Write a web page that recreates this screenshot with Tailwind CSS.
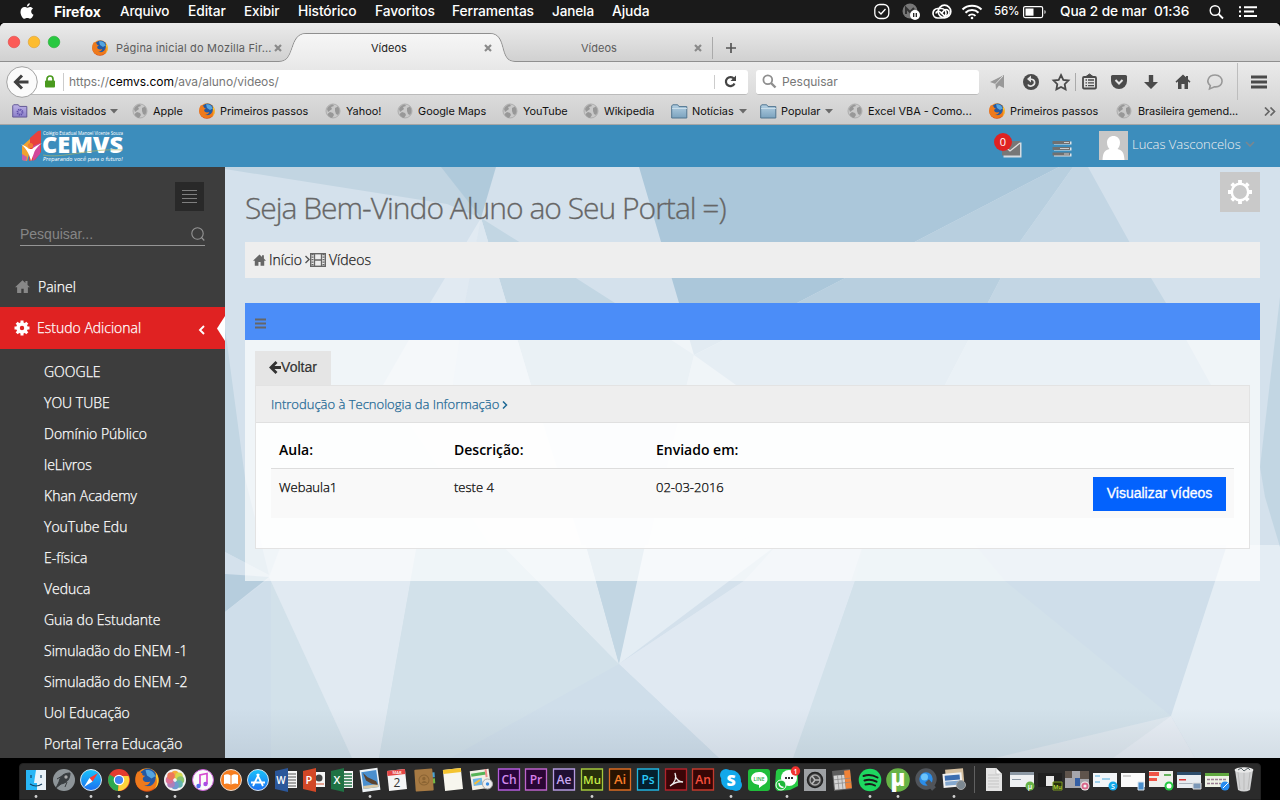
<!DOCTYPE html>
<html lang="pt-BR">
<head>
<meta charset="utf-8">
<title>Vídeos</title>
<script src="https://cdn.jsdelivr.net/npm/@tailwindcss/browser@4"></script>
</head>
<body class="w-[1280px] h-[800px] overflow-hidden bg-black font-['Open_Sans',sans-serif]">
<svg width="0" height="0" class="absolute">
  <defs>
    <radialGradient id="fx" cx=".6" cy=".3" r=".8"><stop offset="0" stop-color="#ffc928"/><stop offset=".5" stop-color="#f5861f"/><stop offset="1" stop-color="#c9350f"/></radialGradient>
    <linearGradient id="fold" x2="0" y2="1"><stop offset="0" stop-color="#b4d0e3"/><stop offset="1" stop-color="#7ba2be"/></linearGradient>
    <linearGradient id="foldp" x2="0" y2="1"><stop offset="0" stop-color="#bdb3e6"/><stop offset="1" stop-color="#8b7fc9"/></linearGradient>
    <linearGradient id="tab" x2="0" y2="1"><stop offset="0" stop-color="#f6f6f6"/><stop offset="1" stop-color="#ebebeb"/></linearGradient>
    <linearGradient id="blue" x2="0" y2="1"><stop offset="0" stop-color="#1ac4fb"/><stop offset="1" stop-color="#1b6ff0"/></linearGradient>
    <linearGradient id="shade" x2="0" y2="1"><stop offset="0" stop-color="#405060" stop-opacity="0"/><stop offset="1" stop-color="#405060" stop-opacity=".1"/></linearGradient>
    <symbol id="firefox" viewBox="0 0 16 16"><circle cx="8" cy="8" r="7.8" fill="url(#fx)"/><circle cx="8.600" cy="6.300" r="5.900" fill="#2459a3"/><path d="M7 1.500c3-.8 6 1 6.500 4L11 7 8 5z" fill="#55a5df"/><path d="M.5 5C1 3.500 1.700 2.800 2 2c.6.900 1.500 1.300 3 1.500-.5.800-.2 1.500 1.800 1.700C6.300 6.200 5 6 5.200 7.500c.8 2.500 3.500 2 5 1.500-.8 2.500-3 3-4.500 2.500 3.500 2.500 8-.5 8-5 1 1 1.200 3 .6 4.500C12.500 17-.5 17 .3 7z" fill="#ee7a1c"/><path d="M14 3.500c2.500 3 2.300 8-1 10.500 2-3 2-6 .7-8z" fill="#fdc52c"/></symbol>
    <symbol id="globe" viewBox="0 0 16 16"><circle cx="8" cy="8" r="7" fill="#c9c9c9" stroke="#a0a0a0" stroke-width=".7"/><path d="M2 6c1-3 4-4.500 6-4.500L9 3 6 4l1 2-2 1.500L3 9zM10 5l3-1.500c2 3 2 6 0 8.500l-2-1-1-3zM5 9l3 1 1 2-2 3c-2-.5-4-2-4.500-4z" fill="#989898"/></symbol>
    <symbol id="folder" viewBox="0 0 17 15"><path d="M.7 14V2l1-1.200h5L8 2.600h7.800V14z" fill="url(#fold)" stroke="#527690"/><path d="M1 4.500h15" stroke="#d4e4ef" stroke-width=".8"/></symbol>
    <symbol id="x" viewBox="0 0 8 8"><path d="M1 1l6 6M7 1L1 7" stroke="#8a8a8a" stroke-width="2.200"/></symbol>
    <symbol id="home" viewBox="0 0 16 14"><path d="M8 .3L0 7.800h2.200V14h4.500V9.500h2.600V14h4.500V7.800H16l-2.600-2.500V1h-2.300v2.200z"/></symbol>
    <symbol id="gear" viewBox="-8 -8 16 16"><circle r="4" fill="none" stroke="#fff" stroke-width="3.600"/><path d="M0-7.500V-4M0 7.500V4M-7.500 0H-4M7.500 0H4M-5.300-5.300L-3-3M5.300 5.300L3 3M-5.300 5.300L-3 3M5.300-5.300L3-3" stroke="#fff" stroke-width="3"/></symbol>
  </defs>
</svg>

<!-- macOS menu bar -->
<header class="h-[23px] bg-[#1a1a1a] text-white flex items-center font-['Inter',sans-serif] text-[13.8px] font-medium tracking-[-0.1px] whitespace-nowrap">
  <svg class="ml-5 mr-[20px] -mt-0.5 shrink-0" width="14" height="16" viewBox="0 0 14 16" fill="#fff"><path d="M9.800.2C9.900 1.800 8.500 3.500 6.900 3.500 6.800 1.900 8.200.4 9.800.2zM7.100 4.700C7.700 4.700 8.600 3.900 10 3.900c1.200 0 2.300.6 3 1.600-2.600 1.500-2.200 5.200.5 6.200-.6 1.700-2 4-3.400 4-1.100 0-1.500-.7-2.800-.7s-1.700.7-2.800.7C2.600 15.700.5 12 .5 8.900c0-3.100 2-4.900 4-4.900 1.200 0 2.100.7 2.600.7z"/></svg>
  <span class="w-[66px] font-bold text-[14px]">Firefox</span><span class="w-[68px] text-[13.500px]">Arquivo</span><span class="w-[56px]">Editar</span><span class="w-[54px] text-[13.500px]">Exibir</span><span class="w-[77px]">Histórico</span><span class="w-[77px]">Favoritos</span><span class="w-[100px]">Ferramentas</span><span class="w-[60px] text-[13.500px]">Janela</span><span class="w-[262px]">Ajuda</span>
  <svg width="118" height="18" viewBox="0 0 118 18" class="shrink-0 mt-px" fill="none" stroke="#fff" stroke-width="1.300"><rect x=".8" y="1.500" width="14" height="14" rx="5"/><path d="M4.500 8.500l2.500 2.500 4.500-5"/><circle cx="36" cy="8" r="7.500" fill="#777" stroke="none"/><path d="M32 11V5l4 4 4-4" stroke="#333" stroke-width="2"/><circle cx="41" cy="12" r="5" fill="#fff" stroke="none"/><path d="M39.700 10v4M42.300 10v4" stroke="#222"/><g stroke-width="1.700"><rect x="59" y="5.500" width="13" height="9.500" rx="4.700"/><circle cx="70.500" cy="8.500" r="6.300"/><path d="M62 10.500c0-2.500 3.500-3 5-1l3 3c2.500 1.500 5-.5 5-3s-3-4-5-2l-3 3.500"/></g><g stroke-width="2"><path d="M88.500 6.500c5-5 14-5 19 0M91.500 9.800c3.500-3.600 9.500-3.600 13 0M94.500 12.900c2-2 5-2 7 0"/></g><circle cx="98" cy="15" r="1.300" fill="#fff" stroke="none"/></svg>
  <span class="w-[29px] text-[11.500px] ml-[2px] tracking-[-0.2px]">56%</span>
  <svg width="24" height="14" viewBox="0 0 24 14" class="shrink-0"><rect x=".6" y="1.600" width="19" height="11" rx="1.500" fill="none" stroke="#fff" stroke-width="1.200"/><rect x="2.500" y="3.500" width="8" height="7.200" fill="#fff"/><path d="M21.500 5c1.500.8 1.500 3.200 0 4z" fill="#fff"/></svg>
  <span class="w-[94px] ml-[13px] text-[13.700px]">Qua 2 de mar</span><span class="w-[55px] text-[13.700px]">01:36</span>
  <svg width="50" height="16" viewBox="0 0 50 16" fill="none" stroke="#fff" class="shrink-0 mt-px"><circle cx="6" cy="6.500" r="4.800" stroke-width="1.400"/><path d="M9.500 10l4.500 4.500" stroke-width="1.800"/><path d="M35 3.200h13M35 7.500h10M35 12h13" stroke-width="2"/><path d="M30 3.200h2M30 7.500h2M30 12h2" stroke-width="2"/></svg>
</header>

<!-- Firefox window -->
<div class="h-[735px] rounded-t-[5px] overflow-hidden bg-[#d6d6d6] flex flex-col">
  <div class="h-[39px] shrink-0 relative bg-linear-to-b from-[#ebebeb] to-[#d0d0d0] font-['Inter',sans-serif] text-[11px] text-[#5c5c5c] whitespace-nowrap">
    <svg class="absolute inset-0" width="1280" height="40" viewBox="0 0 1280 40"><path d="M0 38.500H279C296 38.500 288 10.500 306 10.500H490C508 10.500 498 38.500 515 38.500H1280" fill="none" stroke="#8f8f8f"/><path d="M279 39C296 39 289 11 306 11H490C507 11 498 39 515 39z" fill="url(#tab)"/><path d="M712.500 14v22" stroke="#aaa"/><circle cx="14" cy="19" r="5.800" fill="#fc5b57" stroke="#df4744" stroke-width=".6"/><circle cx="34" cy="19" r="5.800" fill="#fdbc2f" stroke="#de9f34" stroke-width=".6"/><circle cx="54" cy="19" r="5.800" fill="#28c840" stroke="#27aa35" stroke-width=".6"/></svg>
    <div class="relative h-[50px] flex items-center">
      <svg class="ml-[92px] mr-2" width="16" height="16"><use href="#firefox"/></svg><span class="w-[158px] tracking-[0.2px]">Página inicial do Mozilla Fir...</span><svg width="8" height="8"><use href="#x"/></svg>
      <span class="ml-[89px] w-[113px] text-[#222]">Vídeos</span><svg width="8" height="8"><use href="#x"/></svg>
      <span class="ml-[89px] w-[113px]">Vídeos</span><svg width="8" height="8"><use href="#x"/></svg>
      <svg class="ml-[24px]" width="10" height="10"><path d="M5 0v10M0 5h10" stroke="#555" stroke-width="1.700"/></svg>
    </div>
  </div>
  <div class="h-[63px] shrink-0 bg-linear-to-b from-[#ebebeb] to-[#cdcdcd] border-b border-[#a5a5a5]">
    <div class="h-[40px] flex items-center pl-[6px] font-['Inter',sans-serif]">
      <svg width="32" height="32" viewBox="0 0 32 32" class="relative z-10 shrink-0"><circle cx="16" cy="16" r="15.300" fill="#fbfbfb" stroke="#a3a3a3"/><path d="M22.500 16H11M16 9.500L9.500 16l6.500 6.500" fill="none" stroke="#404040" stroke-width="3"/></svg>
      <div class="-ml-4 w-[726px] h-[25px] bg-white rounded-[3px] border-b border-[#bbb] flex items-center text-[12px] text-[#777] shrink-0 whitespace-nowrap">
        <svg class="ml-[22px]" width="12" height="13" viewBox="0 0 12 13"><path d="M3 6V4a3 3 0 0 1 6 0v2" fill="none" stroke="#4a9a1e" stroke-width="1.700"/><rect x="1" y="5.500" width="10" height="7" rx="1" fill="#4a9a1e"/></svg>
        <i class="w-px h-[18px] bg-[#ccc] ml-[7px] mr-[5px]"></i><span class="w-[645px] tracking-[-0.050px]">https://<b class="font-normal text-black">cemvs.com</b>/ava/aluno/videos/</span><i class="w-px h-[14px] bg-[#ccc]"></i>
        <svg class="ml-[9px]" width="13" height="13" viewBox="0 0 13 13"><path d="M10 3.800A4.500 4.500 0 1 0 10.500 8.500" fill="none" stroke="#444" stroke-width="2.200"/><path d="M12 .5v5.500H6.500z" fill="#444"/></svg>
      </div>
      <div class="ml-2 w-[223px] h-[25px] bg-white rounded-[3px] border-b border-[#bbb] flex items-center text-[12px] text-[#777] shrink-0"><svg class="ml-[6px] mr-[5px]" width="15" height="15" fill="none" stroke="#8f8f8f"><circle cx="5.800" cy="5.800" r="4.400" stroke-width="1.800"/><path d="M9 9l4.500 4.500" stroke-width="2.400"/></svg>Pesquisar</div>
      <svg width="290" height="40" viewBox="0 0 290 40" class="ml-[10px] shrink-0"><path d="M1 20L15 13V26L10 23.500 7 27.500 6.500 22z" fill="#999"/><path d="M14 14L6.500 22" stroke="#ddd"/><circle cx="42" cy="20" r="8" fill="#4a4a4a"/><path d="M41 17.500c5-1.500 6.500 5 1.500 6.500-1.500.4-3-.3-3.500-1.500" fill="none" stroke="#e4e4e4" stroke-width="1.700"/><path d="M42 13.500v7L38 17z" fill="#e4e4e4"/><path d="M72 13l2.300 4.800 5.200.7-3.800 3.700.9 5.200-4.600-2.500-4.600 2.500.9-5.200-3.800-3.700 5.200-.7z" fill="none" stroke="#4a4a4a" stroke-width="1.800"/><path d="M86.500 11v18" stroke="#aaa"/><rect x="94" y="15" width="13" height="11.500" rx="1" fill="none" stroke="#4a4a4a" stroke-width="1.800"/><path d="M97 14.500l3.500-2.500 3.500 2.500z" fill="#4a4a4a" stroke="#4a4a4a"/><path d="M96.500 18h1.500M99 18h6M96.500 20.800h1.500M99 20.800h6M96.500 23.600h1.500M99 23.600h6" stroke="#4a4a4a" stroke-width="1.300"/><path d="M122 14.500q0-1.500 1.500-1.500h13q1.500 0 1.500 1.500V19a8 8 0 0 1-16 0z" fill="#4a4a4a"/><path d="M126.500 18l3.500 3.500 3.500-3.500" fill="none" stroke="#e4e4e4" stroke-width="2"/><path d="M159.800 13h4.400v7H169l-7 7-7-7h4.800z" fill="#4a4a4a"/><path d="M194 12.500l-7.500 7 1 1.200L189 19.500V27h3.500v-5h3v5h3.500v-7.500l1.500 1.200 1-1.200-2.500-2.300V14h-2v1.300z" fill="#4a4a4a"/><path d="M220.500 27l.8-3.500c-5-4-1.500-10.500 4.700-10.500 9.500 0 9.500 13-.5 11.800z" fill="none" stroke="#999" stroke-width="1.600"/><path d="M248.500 1v37" stroke="#bdbdbd"/><path d="M262 15h16M262 20h16M262 25h16" stroke="#4a4a4a" stroke-width="3"/></svg>
    </div>
    <nav class="h-[18px] flex items-center pl-3 font-['Inter',sans-serif] text-[10.900px] text-[#111] whitespace-nowrap [&>svg]:shrink-0 [&>span]:shrink-0">
      <svg class="mr-[5px]" width="16" height="14" viewBox="0 0 17 15"><path d="M.7 14V2l1-1.200h5L8 2.600h7.800V14z" fill="url(#foldp)" stroke="#5e5291"/><circle cx="8.500" cy="8.800" r="2.700" fill="none" stroke="#5e4fa8" stroke-width="2" stroke-dasharray="1.300 .8"/></svg><span class="w-[77px]">Mais visitados</span><svg width="8" height="5" class="mr-[14px]"><path d="M0 0h8L4 4.500z" fill="#6a6a6a"/></svg>
      <svg width="16" height="16" class="mr-[5px]"><use href="#globe"/></svg><span class="w-[46px]">Apple</span>
      <svg width="16" height="16" class="mr-[5px]"><use href="#firefox"/></svg><span class="w-[105px]">Primeiros passos</span>
      <svg width="16" height="16" class="mr-[5px]"><use href="#globe"/></svg><span class="w-[51px]">Yahoo!</span>
      <svg width="16" height="16" class="mr-[5px]"><use href="#globe"/></svg><span class="w-[84px]">Google Maps</span>
      <svg width="16" height="16" class="mr-[5px]"><use href="#globe"/></svg><span class="w-[60px]">YouTube</span>
      <svg width="16" height="16" class="mr-[5px]"><use href="#globe"/></svg><span class="w-[67px]">Wikipedia</span>
      <svg width="17" height="15" class="mr-[4px]"><use href="#folder"/></svg><span class="w-[47px]">Notícias</span><svg width="8" height="5" class="mr-[13px]"><path d="M0 0h8L4 4.500z" fill="#6a6a6a"/></svg>
      <svg width="17" height="15" class="mr-[4px]"><use href="#folder"/></svg><span class="w-[44px]">Popular</span><svg width="8" height="5" class="mr-[14px]"><path d="M0 0h8L4 4.500z" fill="#6a6a6a"/></svg>
      <svg width="16" height="16" class="mr-[5px]"><use href="#globe"/></svg><span class="w-[121px]">Excel VBA - Como...</span>
      <svg width="16" height="16" class="mr-[5px]"><use href="#firefox"/></svg><span class="w-[106px]">Primeiros passos</span>
      <svg width="16" height="16" class="mr-[6px]"><use href="#globe"/></svg><span class="w-[126px] tracking-[-0.1px]">Brasileira gemend...</span>
      <svg width="12" height="9" fill="none" stroke="#666" stroke-width="1.700"><path d="M1 .5l4 4-4 4M6.500.5l4 4-4 4"/></svg>
    </nav>
  </div>

  <!-- Portal header -->
  <div class="h-[42px] shrink-0 bg-[#3c8dbc] flex items-start">
    <svg class="ml-5 mt-[3px]" width="110" height="36" viewBox="0 0 110 36">
      <path d="M10 10L18 3l3-.5V24l-6 8-6 1z" fill="#e8413c"/><path d="M2 18l8-7v12l-3 10-5-1z" fill="#f0a22f"/><path d="M13 18l7-3v11l-7 7z" fill="#d2479a"/><path d="M2 26l5 3-1 4-4-1z" fill="#c45fa8"/><path d="M1 16c3 1.500 6 3 8 5h3c2-2 6-4 10-6-5 4-7 7-8 10l-3 8c-1-5-4-12-10-17z" fill="#fff"/><circle cx="10.500" cy="17.500" r="2.600" fill="#f07c35"/>
      <text x="23" y="6.500" font-family="Open Sans" font-size="4.500" fill="#fff" textLength="80">Colégio Estadual Manoel Vicente Souza</text>
      <text x="22" y="24.800" font-family="Open Sans" font-weight="800" font-size="23.500" fill="#fff" textLength="81" lengthAdjust="spacingAndGlyphs">CEMVS</text>
      <path d="M23 27c20 4 45-7 80-5" fill="none" stroke="#a9b46b" stroke-width=".7"/>
      <text x="23" y="33" font-family="DejaVu Sans" font-style="italic" font-size="5.500" fill="#fff" textLength="80" lengthAdjust="spacingAndGlyphs">Preparando você para o futuro!</text>
    </svg>
    <div class="ml-[862px] relative w-[30px] h-[42px]">
      <svg class="absolute left-[9px] top-[15px]" width="22" height="18"><rect x="2.500" y="2.500" width="18" height="15" fill="#d5dbe0"/><rect x="1" y="1" width="18" height="14.500" fill="#777"/><path d="M1 4l8 7L19 3" fill="none" stroke="#ddd" stroke-width="1.300"/></svg>
      <span class="absolute left-[2px] top-[8px] size-[18px] rounded-full bg-[#e02222] text-white text-[11px] leading-[17px] text-center">0</span>
    </div>
    <svg class="ml-[30px] mt-[15px]" width="20" height="17"><path d="M2 3h17.500M2 9h17.500M2 15h17.500" stroke="#dfe3e6" stroke-width="3"/><path d="M.5 2.500h17.500M.5 8.500h17.500M.5 14h17.500" stroke="#707070" stroke-width="3.200"/><path d="M12 2.500h5M8 8.500h9M12 14h5" stroke="#ccc"/></svg>
    <svg class="ml-[27px] mt-[6px]" width="29" height="29" viewBox="0 0 29 29"><path fill="#c7c7c7" d="M0 0h29v29H0z"/><path d="M14.500 5c3.500 0 6.500 2.500 6.500 6.500 0 3-1 5-2.500 6.500 4 1 6.500 2.500 7 11h-22c.500-8.500 3-10 7-11C9 16.500 8 14.500 8 11.500 8 7.500 11 5 14.500 5z" fill="#fff"/></svg>
    <span class="ml-[4px] mt-[9px] text-[13px] leading-[20px] font-light text-[#f0f0f0] w-[113px] whitespace-nowrap">Lucas Vasconcelos</span>
    <svg class="mt-[16px]" width="10" height="7" fill="none" stroke="#7a8790" stroke-width="1.600"><path d="M1 1l4 4 4-4"/></svg>
  </div>

  <div class="flex h-[591px]">
    <!-- Sidebar -->
    <aside class="w-[225px] shrink-0 bg-[#3d3d3d] text-white text-[14px] font-light [-webkit-text-stroke:0.25px_white]">
      <div class="h-[15px]"></div>
      <div class="ml-[175px] size-[29px] bg-[#292929] flex flex-col items-center justify-center gap-[3px]"><i class="w-[15px] h-px bg-[#7f7f7f]"></i><i class="w-[15px] h-px bg-[#7f7f7f]"></i><i class="w-[15px] h-px bg-[#7f7f7f]"></i><i class="w-[15px] h-px bg-[#7f7f7f]"></i></div>
      <div class="mt-[12px] mx-5 h-[23px] border-b border-[#959595] flex items-center justify-between font-['Liberation_Sans',sans-serif] text-[14px] text-[#868686] [-webkit-text-stroke:0px]">Pesquisar...<svg width="14" height="14" fill="none" stroke="#959595" stroke-width="1.100"><circle cx="6.500" cy="6.500" r="5.700"/><path d="M10.500 10.500l2.800 3"/></svg></div>
      <div class="mt-[20px] h-[41px] flex items-center pl-[15px]"><svg width="15" height="13" fill="#888"><use href="#home"/></svg><span class="ml-2">Painel</span></div>
      <div class="h-[42px] bg-[#e02222] flex items-center pl-[14px] relative"><svg width="16" height="16"><use href="#gear"/></svg><span class="ml-[7px] w-[161px] -mt-px">Estudo Adicional</span><svg class="mt-[3px]" width="8" height="10" fill="none" stroke="#fff" stroke-width="1.900"><path d="M6 1L2 5l4 4"/></svg><svg class="absolute right-0 top-[9px]" width="8" height="25"><path d="M8 0v25L0 12.500z" fill="#fff"/></svg></div>
      <ul class="pt-[7px] pl-11 leading-[31px]">
        <li>GOOGLE</li><li>YOU TUBE</li><li>Domínio Público</li><li>leLivros</li><li>Khan Academy</li><li>YouTube Edu</li><li>E-física</li><li>Veduca</li><li>Guia do Estudante</li><li>Simuladão do ENEM -1</li><li>Simuladão do ENEM -2</li><li>Uol Educação</li><li>Portal Terra Educação</li>
      </ul>
    </aside>

    <main class="relative w-[1055px] px-5">
      <svg class="absolute inset-0" width="1055" height="591" viewBox="0 0 1055 591">
        <path fill="#d4e1ec" d="M0 0h1055v591H0z"/>
        <path fill="#c2d5e2" d="M0 2L0 0h217l39 51-34-14z"/><path fill="#b0cadb" d="M216 0h55l-15 51z"/>
        <path fill="#abc7da" d="M414 0h420L572 136 469 188 454 136z"/>
        <path fill="#b8cfdf" d="M834 0h14L794 76 720 218H469v-30l103-52z"/>
        <path fill="#c3d6e4" d="M848 0h15l42 76 36 60 45 82H720l74-142z"/>
        <path fill="#c2d6e3" d="M256 51l40 25 94 60 79 52-55 226-20 83-88-279z"/>
        <path fill="#d5e1ec" d="M469 188l42 30h209l-90 110-216 86z"/>
        <path fill="#e1eaf2" d="M256 51l-51 85-47 82 111 167 125 112-88-279z"/><path fill="#d9e5ee" d="M256 51l-16 85-12 82h78z" opacity=".6"/>
        <path fill="#c2d6e3" d="M0 161l20 150 24 97L0 385z"/><path fill="#d4e1ec" d="M0 385l44 23-44-1z"/><path fill="#b6cddd" d="M0 407l44 3L0 445z"/>
        <path fill="#cfdeea" d="M0 445l46-35v181H0z"/>
        <path fill="#d2e1ea" d="M46 412h254l94 85-167 94H46z"/>
        <path fill="#e1eaf2" d="M192 378l-38 213h-27L44 410l12-32z"/>
        <path fill="#d2e1ea" d="M192 378h85l117 119-167 94h-73z"/>
        <path fill="#e0eaf1" d="M277 378h84l33 119z"/><path fill="#c2d6e3" d="M361 378h59l-26 119z"/>
        <path fill="#e4edf4" d="M420 378h132L394 497z"/><path fill="#e0e9f2" d="M552 378h86l-70 213h-74l-100-94 125-83z"/>
        <path fill="#e0e9f2" d="M394 497l125-83h111l-61 177h-75z"/>
        <path fill="#cfdeea" d="M394 497l100 94H225z"/>
        <path fill="#d2e1ea" d="M638 378h112l196 171-176 42H568l62-177z"/>
        <path fill="#cfdeea" d="M750 378h252l-56 171-166-135z"/><path fill="#e4edf4" d="M1002 378h53v213h-85l-24-42z"/>
        <path fill="#dfe8ef" d="M946 549l24 42H770z"/><path fill="#e7edf4" d="M946 549l24 42h-82z"/>
        <path fill="#c2d6e3" d="M1055 130l-20 170 5 30 15 50z"/>
        <path fill="url(#shade)" d="M0 541h1055v50H0z"/>
      </svg>
      <div class="relative">
        <h1 class="pt-[21px] h-[75px] text-[30px] leading-[40px] font-light tracking-[-1px] text-[#666] [-webkit-text-stroke:0.3px_#666] whitespace-nowrap">Seja Bem-Vindo Aluno ao Seu Portal =)</h1>
        <div class="absolute top-0 right-0 mt-[5px] size-10 bg-[#c9c9c9] flex items-center justify-center"><svg width="24" height="24" viewBox="-12 -12 24 24" fill="none" stroke="#fff"><circle r="8.200" stroke-width="2.500"/><path d="M0-12v3M0 12V9M-12 0h3M12 0H9M-8.300-8.300l2 2M8.300 8.300l-2-2M-8.300 8.300l2-2M8.300-8.300l-2 2" stroke-width="3.800"/></svg></div>
        <div class="h-[36px] bg-[#eee] flex items-center pl-2 pb-px text-[14px] text-[#222] font-light [-webkit-text-stroke:0.250px_#222]"><svg width="13" height="12" fill="#666"><use href="#home"/></svg><span class="ml-[3px] w-[36px]">Início</span><svg width="5" height="9" fill="none" stroke="#555" stroke-width="1.400"><path d="M.5 1L4 4.500.5 8"/></svg><svg width="16" height="14" viewBox="0 0 16 14" fill="none" stroke="#666"><rect x=".7" y=".7" width="14.600" height="12.600" stroke-width="1.400"/><path d="M4.500 1v12M11.500 1v12M4.500 7h7" stroke-width="1.300"/><path d="M2.500 1v12M13.500 1v12" stroke-width="2" stroke-dasharray="1.200 1.300"/></svg><span class="ml-[3px]">Vídeos</span></div>
        <section class="mt-[25px] h-[278px] bg-white/65">
          <div class="h-[37px] bg-[#4b8df8] flex items-center pl-[10px] pt-1"><svg width="11" height="11"><path d="M0 1.500h11M0 5.500h11M0 9.500h11" stroke="#666" stroke-width="2"/></svg></div>
          <div class="px-[10px] pt-[11px]">
            <button class="w-[76px] h-[34px] bg-[#e5e5e5] flex items-center justify-center pb-0.5 font-['Liberation_Sans',sans-serif] text-[14px] text-[#333] [-webkit-text-stroke:0.2px_#333]"><svg width="12" height="13" viewBox="0 0 12 13"><path d="M12 6.500H3M7.500 1L2 6.500 7.500 12" fill="none" stroke="#333" stroke-width="2.800"/></svg>Voltar</button>
            <div class="h-[164px] border border-[#e3e3e3] bg-white/85 text-[13px]">
              <div class="h-[37px] bg-[#eee] border-b border-[#e0e0e0] flex items-center pl-[15px] pt-px text-[#1b6794]"><span class="w-[231px] font-light [-webkit-text-stroke:0.25px_#1b6794] whitespace-nowrap">Introdução à Tecnologia da Informação</span><svg width="6" height="8" fill="none" stroke="#1b6794" stroke-width="1.500"><path d="M1 .5l3.500 3.500L1 7.500"/></svg></div>
              <div class="mx-[15px] h-[46px] border-b border-[#ddd] grid grid-cols-[175px_202px_1fr] px-2 pt-[7px] items-center font-semibold text-[14px] text-black"><span>Aula:</span><span>Descrição:</span><span>Enviado em:</span></div>
              <div class="mx-[15px] h-[49px] bg-[#f9f9f9] grid grid-cols-[175px_202px_1fr_133px] px-2 pt-[8px] leading-[20px] text-black font-light [-webkit-text-stroke:0.25px_black]"><span>Webaula1</span><span>teste 4</span><span>02-03-2016</span><button class="h-[34px] pb-0.5 bg-[#0362fd] text-white font-['Liberation_Sans',sans-serif] text-[14px] [-webkit-text-stroke:0.3px_white]">Visualizar vídeos</button></div>
            </div>
          </div>
        </section>
      </div>
    </main>
  </div>
</div>

<!-- Dock -->
<footer class="h-[42px] bg-black px-[19px] pt-[5px]">
  <div class="h-[37px] w-[1242px] bg-[#2b2b2b] rounded-t-[4px] border border-[#222]">
  <svg class="-ml-5 -mt-[6px]" width="1280" height="42" viewBox="0 758 1280 42" font-family="Open Sans" font-weight="600" font-size="13" text-anchor="middle">
    <path fill="#29b6f6" d="M26 770h20v20H26z"/><path fill="#e9f2f9" d="M36 770h10v20h-9v-7h-3z"/><path d="M30 784q6 4 12 0M31 775v3M41 775v3" stroke="#17405f" fill="none" stroke-width="1.200"/>
    <circle cx="64" cy="780" r="11" fill="#8e9599"/><path d="M56 788l3-6c1-6 5-9 11-9 0 6-3 10-9 11zM57 779l5-3M65 787l2-5" fill="#393d40" stroke="#393d40"/><circle cx="66" cy="777" r="1.700" fill="#aaa"/>
    <circle cx="91" cy="780" r="10.500" fill="url(#blue)" stroke="#dbe4ea"/><path d="M98 773l-8.500 5 3 3.500z" fill="#ff3b30"/><path d="M84 787l8.500-5.500-3-3.500z" fill="#fff"/>
    <circle cx="119" cy="780" r="11" fill="#e33b2e"/><path d="M119 780l-9.500-5.500A11 11 0 0 0 118 791z" fill="#2ca94f"/><path d="M119 780l-1 11a11 11 0 0 0 10.500-15H119z" fill="#fdd23c"/><circle cx="119" cy="780" r="4.700" fill="#4285f4" stroke="#fff" stroke-width="1.200"/>
    <svg x="135" y="768" width="24" height="24"><use href="#firefox"/></svg>
    <circle cx="175" cy="780" r="11" fill="#f2f2f2"/><g opacity=".85"><circle cx="175" cy="774.500" r="3.800" fill="#f7a11b"/><circle cx="179" cy="776.200" r="3.800" fill="#cdd534"/><circle cx="180.500" cy="780" r="3.800" fill="#79bb58"/><circle cx="179" cy="784" r="3.800" fill="#4ba9a4"/><circle cx="175" cy="785.500" r="3.800" fill="#5a8ccc"/><circle cx="171" cy="784" r="3.800" fill="#a36cb1"/><circle cx="169.500" cy="780" r="3.800" fill="#d75b88"/><circle cx="171" cy="776" r="3.800" fill="#ee6240"/></g>
    <circle cx="203" cy="780" r="10.500" fill="#fafafa" stroke="#cb62d9"/><path d="M200 786v-11l7-1.500V784" fill="none" stroke="#d54ad0" stroke-width="1.700"/><circle cx="198.500" cy="786" r="2.200" fill="#536df0"/><circle cx="205.500" cy="784" r="2.200" fill="#a84de4"/>
    <circle cx="231" cy="780" r="10.500" fill="#f77d1e" stroke="#e9d9cb"/><path d="M224 775q4-1.500 6.500.5v9q-3-1.500-6.500-.5zM238 775q-4-1.500-6.500.5v9q3-1.500 6.500-.5z" fill="#fff"/>
    <circle cx="258" cy="780" r="10.500" fill="url(#blue)" stroke="#d8e3ee"/><path d="M253 786l6-12M263 786l-6-12M251 782.500h14" stroke="#fff" stroke-width="1.800"/>
    <path fill="#f5f5f5" d="M286 771h11v17h-11z"/><path d="M288 774h8M288 777h8M288 780h8M288 783h8M288 786h8" stroke="#555"/><path fill="#2b579a" d="M275 771l13-3v24l-13-3z"/><text x="281" y="784" fill="#fff" font-size="10">W</text>
    <path fill="#f5f5f5" d="M313 772h12v15h-12z"/><circle cx="319" cy="778" r="3.500" fill="#444"/><path d="M315 784h9" stroke="#d35230"/><path fill="#d24726" d="M303 771l13-3v24l-13-3z"/><text x="309" y="784" fill="#fff" font-size="11">P</text>
    <path fill="#f5f5f5" d="M342 771h11v17h-11z"/><path d="M344 774h8M344 777h8M344 780h8M344 783h8M344 786h8" stroke="#217346" stroke-width="1.700"/><path fill="#1f7244" d="M331 771l13-3v24l-13-3z"/><text x="337" y="784" fill="#fff" font-size="11">X</text>
    <g transform="rotate(-8 370 780)"><path fill="#eef3f6" d="M361 769h18v22h-18z"/><path fill="#4a8fce" d="M362.500 771h15v17h-15z"/><path fill="#d8c9a8" d="M362.500 785h15v3h-15z"/><path d="M364 772l4 5 8 5 1 4-6-2-5-4z" fill="#5a4330"/></g>
    <g transform="rotate(-6 397 780)"><path fill="#f5f5f5" d="M388 770h18v20h-18z"/><path fill="#e44646" d="M388 770h18v5h-18z"/></g><text x="397" y="787" fill="#333" font-weight="400" font-size="12">2</text><text x="397" y="774" font-size="4" fill="#fff">MAR</text>
    <g transform="rotate(-4 425 780)"><path fill="#48a4d6" d="M432 773h3v5h-3z"/><path fill="#74bb44" d="M432 779h3v5h-3z"/><rect x="415" y="769" width="18" height="22" rx="1" fill="#a77a43"/><circle cx="424" cy="780" r="5" fill="none" stroke="#8b6433"/><circle cx="424" cy="778.500" r="1.700" fill="#8b6433"/><path d="M421 783q3-4 6 0z" fill="#8b6433"/></g>
    <g transform="rotate(-6 453 780)"><path fill="#f7f6ee" d="M444 769h18v21h-18z"/><path fill="#f4c430" d="M444 769h18v4h-18z"/></g>
    <g transform="rotate(-8 480 780)"><path fill="#f2f0e6" d="M471 770h19v19h-19z"/><path d="M472 774h15" stroke="#56b356" stroke-width="3"/><path d="M473 778h9v7h-9z" fill="#6eb5e8"/><path d="M474 783l6-3" stroke="#f3be3b" stroke-width="2"/><path d="M487 770v8" stroke="#ef8c8c" stroke-width="2"/></g><circle cx="487.500" cy="784" r="5" fill="#eee" stroke="#aaa"/><circle cx="487.500" cy="784" r="1.700" fill="#3c8ee2"/>
    <g stroke-width="1.300"><path fill="#28053b" stroke="#b45cdb" d="M498.500 769h21v21h-21z"/><path fill="#2a0634" stroke="#bd63cb" d="M525.500 769h21v21h-21z"/><path fill="#1f1033" stroke="#b59ae0" d="M553.500 769h21v21h-21z"/><path fill="#28300a" stroke="#a4c83c" d="M581.500 769h21v21h-21z"/><path fill="#291301" stroke="#dc6c22" d="M609.500 769h21v21h-21z"/><path fill="#04202e" stroke="#20b4df" d="M637.500 769h21v21h-21z"/><path fill="#3b0507" stroke="#b1232b" d="M665.500 769h21v21h-21z"/><path fill="#360605" stroke="#c23a2d" d="M692.500 769h21v21h-21z"/></g>
    <text x="509" y="784" fill="#d08aee" font-size="12">Ch</text><text x="536" y="784" fill="#d77fe8" font-size="12">Pr</text><text x="564" y="784" fill="#c8a8f0" font-size="12">Ae</text><text x="592" y="784" fill="#c3ea47" font-size="11.500">Mu</text><text x="620" y="784" fill="#f77d28">Ai</text><text x="648" y="784" fill="#2ac9f7" font-size="12">Ps</text><text x="703" y="784" fill="#f8513e" font-size="12">An</text><path d="M670 786c5-3 7-9 5-13 0 6 4 9 8 9-5-1-9 1-13 4z" fill="none" stroke="#eee" stroke-width="1.300"/>
    <circle cx="731" cy="780" r="10" fill="#12a8ea"/><circle cx="726" cy="775" r="6" fill="#12a8ea"/><circle cx="736" cy="785" r="6" fill="#12a8ea"/><text x="731" y="786" fill="#fff" font-size="16" font-weight="800">S</text>
    <rect x="748" y="769" width="22" height="22" rx="3" fill="#20bd3b"/><path d="M759 772c10 0 11 11 4 13l-4 3v-3c-11-1-10-13 0-13z" fill="#fff"/><text x="759" y="781" font-size="5" fill="#20a93b">LINE</text>
    <path d="M778 769h15q5 0 5 5v12l-8 4-12 1q-3-1-3-6l1-14z" fill="#25ca43"/><circle cx="789" cy="778" r="8" fill="#fff"/><path d="M785 778h2M788 778h2M791 778h2" stroke="#333" stroke-width="2"/><circle cx="781" cy="785" r="5" fill="#1eb83a" stroke="#fff"/><path d="M779 783q0 4 4.500 4.500" stroke="#fff" stroke-width="1.500" fill="none"/><circle cx="795.500" cy="771" r="4.700" fill="#f1322f"/><text x="795.500" y="773.500" font-size="7" fill="#fff">1</text>
    <path fill="#9ea1a4" d="M804 769h22v22h-22z"/><circle cx="815" cy="780" r="7.500" fill="#444" stroke="#222" stroke-width="1.500"/><circle cx="815" cy="780" r="5" fill="none" stroke="#aaa" stroke-width="1.300"/><path d="M815 780h5M815 780l-3 4M815 780l-3-4" stroke="#bbb" stroke-width="1.500"/>
    <g transform="rotate(-6 842 780)"><path fill="#5e5e5e" d="M833 770h18v20h-18z"/><path fill="#d4d4d4" d="M834 775h11v14h-11z"/><path fill="#f08338" d="M845 771h6v18h-6z"/><path d="M834 779h17M834 783h17M838 775v14M842 775v14" stroke="#888" stroke-width=".7"/></g>
    <circle cx="870" cy="780" r="11.300" fill="#1ed760"/><path d="M863.500 776q7-2.500 14 1.500M864.500 780.500q6-2 12 1.200M865.500 784.500q5-1.500 9.500 1" fill="none" stroke="#1a1a1a" stroke-width="2" stroke-linecap="round"/>
    <circle cx="898" cy="780" r="11.800" fill="#67b346"/><text x="898" y="786" font-size="22" font-weight="800" fill="#fff">µ</text>
    <circle cx="926" cy="779" r="8.700" fill="#2b8de8" stroke="#50545a" stroke-width="4"/><path d="M927 781l7 8" stroke="#50545a" stroke-width="5"/><circle cx="924.500" cy="777" r="3.500" fill="#6cc4fb"/>
    <g transform="rotate(-5 954 780)"><path fill="#d6c0a0" d="M946 769h18v13h-18z"/><path fill="#f1f1f1" d="M943 773h19v14h-19z"/><path fill="#3c6db0" d="M945 775h15v5h-15z"/><path fill="#84a8cf" d="M945 781h15v4h-15z"/></g><circle cx="961" cy="785" r="4.500" fill="#7c8891" stroke="#a5a5a5"/>
    <path d="M974.500 766v27" stroke="#606060"/>
    <path fill="#e4e4e4" d="M986 768h10l6 6v17h-16z"/><path fill="#fafafa" stroke="#aaa" stroke-width=".5" d="M996 768v6h6z"/><path d="M988 775h11M988 778h11M988 781h11M988 784h11M988 787h11" stroke="#c5c5c5"/>
    <g><path fill="#eef0f2" d="M1010 772h24v15h-24z"/><path fill="#8d99a5" d="M1010 772h24v3h-24zM1012 779h9v1h-9z"/><path fill="#202020" d="M1038 773h24v14h-24z"/><path fill="#e8e8e8" d="M1046 776h8v10h-8z"/><path fill="#a6a6ac" d="M1065 771h24v17h-24z"/><path fill="#5f544c" d="M1065 771h7v7h-7zM1080 771h9v8h-9z"/><path fill="#355fa4" d="M1075 778h5v8h-5z"/><path fill="#f2f5f8" d="M1093 773h24v14h-24z"/><path d="M1095 776h5M1102 779h8M1095 782h5" stroke="#4cacde"/><path fill="#fafafa" d="M1121 773h24v14h-24z"/><path d="M1123 776h8" stroke="#aaa"/><path fill="#efefec" d="M1149 771h24v16h-24z"/><path fill="#f05447" d="M1149 772h10v4h-10zM1149 778h8v3h-8z"/><path fill="#65b35d" d="M1164 774h7v2h-7z"/><path fill="#e8edf1" d="M1177 772h24v16h-24z"/><path fill="#2c4c6b" d="M1177 772h24v3h-24z"/><path fill="#d33" d="M1179 779h7v1.500h-7z"/><path fill="#aab4bd" d="M1179 783h14v1h-14z"/><path fill="#eef3e5" d="M1205 773h24v14h-24z"/><path fill="#60a83f" d="M1205 773h24v3h-24z"/><path d="M1207 779.500h20M1207 783.500h14" stroke="#9c7f95" stroke-width="1.500" stroke-dasharray="3 1"/></g>
    <circle cx="1030" cy="786" r="4.500" fill="#67b346"/><text x="1030" y="789" font-size="7" fill="#fff">µ</text><path fill="#28300a" stroke="#7c9c25" d="M1053 782h9v8h-9z"/><text x="1057.500" y="788.500" font-size="5.500" fill="#c3ea47">Mu</text><circle cx="1085" cy="786" r="4.500" fill="#f3f3f3"/><circle cx="1085" cy="786" r="2.600" fill="none" stroke="#d7698b" stroke-width="2"/><circle cx="1113" cy="786" r="4.500" fill="#12a8ea"/><text x="1113" y="789" font-size="7" fill="#fff">S</text><path fill="#4a8fce" stroke="#d8e4ed" d="M1138 782h6v8h-6z"/><circle cx="1169" cy="786" r="4.500" fill="#25ca43"/><circle cx="1169" cy="786" r="2.500" fill="#fff"/><path fill="#7b98b8" stroke="#ddd" d="M1193 783h8v6h-8z"/><circle cx="1225" cy="786" r="4.500" fill="#258cf0"/><path d="M1228 783l-5 5" stroke="#fff"/>
    <path d="M1235 770h18l-3 20q-6 3-12 0z" fill="#d2d3d4"/><path d="M1238 772l2 17M1244 772v18M1250 772l-2 17" stroke="#bbb"/><ellipse cx="1244" cy="770" rx="9.500" ry="2.800" fill="#e9e9e9"/><path d="M1238 770l3-2 3 3 4-3 2 2" stroke="#5c676a" fill="none"/>
    <g fill="#d0d0d0"><circle cx="36" cy="796.500" r="1.400"/><circle cx="91" cy="796.500" r="1.400"/><circle cx="119" cy="796.500" r="1.400"/><circle cx="147" cy="796.500" r="1.400"/><circle cx="175" cy="796.500" r="1.400"/><circle cx="370" cy="796.500" r="1.400"/><circle cx="592" cy="796.500" r="1.400"/><circle cx="731" cy="796.500" r="1.400"/><circle cx="787" cy="796.500" r="1.400"/><circle cx="870" cy="796.500" r="1.400"/><circle cx="898" cy="796.500" r="1.400"/><circle cx="954" cy="796.500" r="1.400"/></g>
  </svg>
  </div>
</footer>
</body>
</html>
